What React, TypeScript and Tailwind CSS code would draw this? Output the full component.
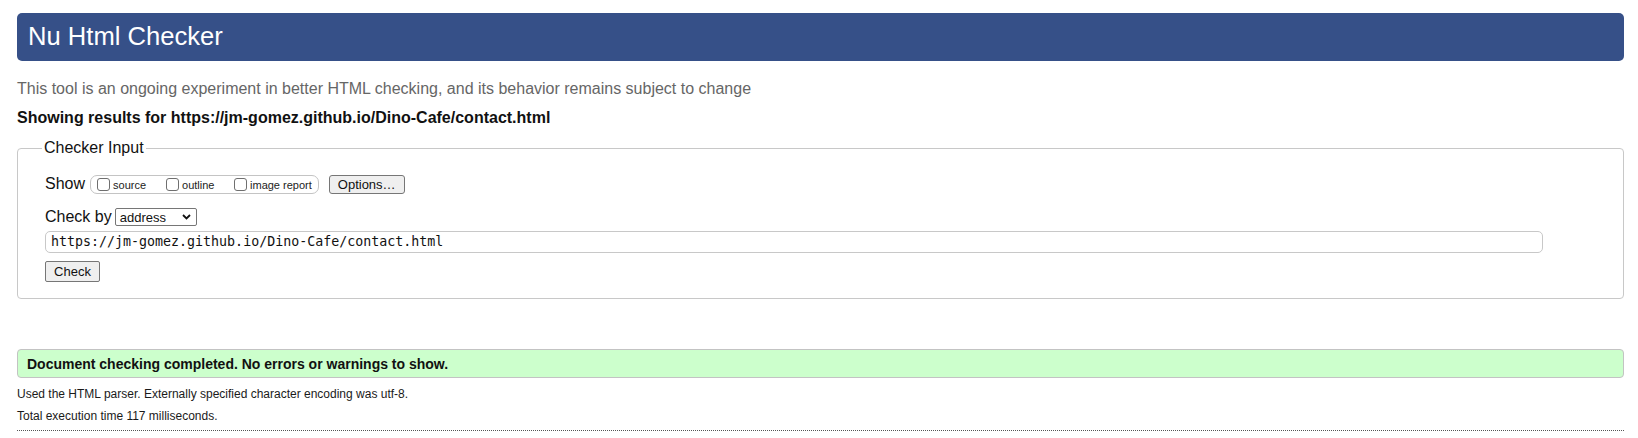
import React from "react";

function Box({ label }: { label: string }) {
  return (
    <label className="flex items-center">
      <input
        type="checkbox"
        className="appearance-none m-0 w-[13px] h-[13px] border border-[#6f6f6f] rounded-[3px] bg-white"
      />
      <span className="ml-[3px] text-[11px] leading-[13px] text-[#222] mt-[2px]">{label}</span>
    </label>
  );
}

export default function App() {
  return (
    <div className="bg-white w-[1638px] h-[438px] overflow-hidden pl-[17px] pr-[14px] pt-[13px] font-['Liberation_Sans',Arial,sans-serif] text-[#000]">
      <div className="h-[48px] bg-[#365088] rounded-[5px] flex items-center pl-[11px] pb-[2px]">
        <h1 className="text-white text-[25.6px] leading-[30px] font-normal">Nu Html Checker</h1>
      </div>

      <p className="mt-[18px] text-[16px] leading-[20px] text-[#666]">
        This tool is an ongoing experiment in better HTML checking, and its behavior remains subject to change
      </p>
      <p className="mt-[9px] text-[16px] leading-[20px] font-bold text-[#111]">
        Showing results for https://jm-gomez.github.io/Dino-Cafe/contact.html
      </p>

      <fieldset className="mt-[11px] border border-[#c8c8c8] rounded-[4px] pl-[27px] pr-[80px] pt-[17px] pb-[16px] h-[160px]">
        <legend className="-ml-[3px] px-[2px] text-[16px] leading-[18px] text-[#111]">Checker Input</legend>

        <div className="flex items-center h-[20px]">
          <span className="text-[16px] leading-[20px] text-[#111]">Show</span>
          <div className="ml-[5px] h-[19px] border border-[#c4c4c4] rounded-[7px] flex items-center pl-[6px] pr-[6px]">
            <div className="w-[69px] flex"><Box label="source" /></div>
            <div className="w-[68px] flex"><Box label="outline" /></div>
            <Box label="image report" />
          </div>
          <button className="ml-[10px] h-[19px] px-[8px] border border-[#767676] rounded-[3px] bg-[#efefef] text-[13px] leading-[15px] text-[#111]">
            Options…
          </button>
        </div>

        <div className="mt-[14px] flex items-center h-[18px]">
          <span className="text-[16px] leading-[18px] text-[#111]">Check by</span>
          <div className="ml-[3px] w-[82px] h-[18px] border border-[#767676] rounded-[2px] bg-white flex items-center justify-between pl-[4px] pr-[5px]">
            <span className="text-[13px] leading-[15px] text-[#111]">address</span>
            <svg width="9" height="6" viewBox="0 0 9 6">
              <polyline points="1,1 4.5,4.5 8,1" fill="none" stroke="#111" strokeWidth="1.8" />
            </svg>
          </div>
        </div>

        <div className="mt-[5px] h-[22px] w-[1498px] border border-[#c8c8c8] rounded-[5px] flex items-center pl-[5px]">
          <span className="text-[13.3px] leading-[16px] text-[#111] font-['DejaVu_Sans_Mono',monospace]">
            https://jm-gomez.github.io/Dino-Cafe/contact.html
          </span>
        </div>

        <button className="mt-[8px] block h-[21px] w-[55px] border border-[#767676] rounded-[2px] bg-[#efefef] text-[13px] leading-[15px] text-[#111]">
          Check
        </button>
      </fieldset>

      <div className="mt-[50px] h-[29px] bg-[#ccffcc] border border-[#c3c3c3] rounded-[4px] flex items-center pl-[9px]">
        <span className="text-[14px] font-bold leading-[16px] text-[#111]">
          Document checking completed. No errors or warnings to show.
        </span>
      </div>
      <p className="mt-[9px] text-[12px] leading-[14px] text-[#1a1a1a]">
        Used the HTML parser. Externally specified character encoding was utf-8.
      </p>
      <p className="mt-[8px] text-[12px] leading-[14px] text-[#1a1a1a]">Total execution time 117 milliseconds.</p>
      <div className="mt-[7px] border-t border-dotted border-[#555]" />
    </div>
  );
}
